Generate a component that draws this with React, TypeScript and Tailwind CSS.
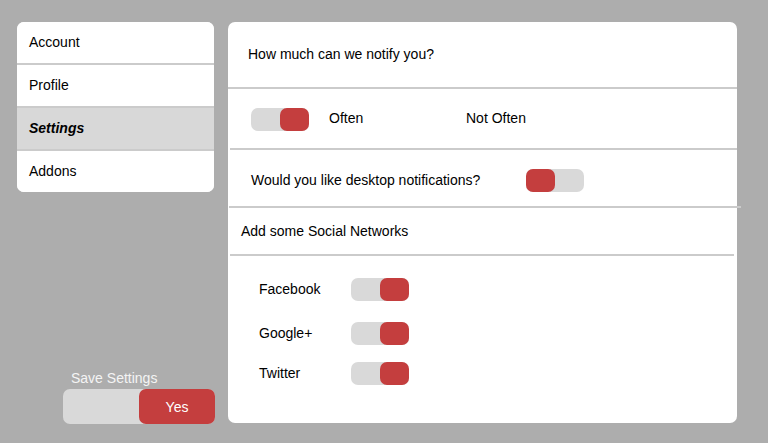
import React, { useState } from 'react';

const font = { fontFamily: '"Liberation Sans", Arial, sans-serif' };

const Toggle: React.FC<{ on: boolean; onClick: () => void }> = ({ on, onClick }) => (
  <button
    onClick={onClick}
    className={`flex h-[23px] w-[58px] shrink-0 rounded-[7px] bg-[#d9d9d9] ${on ? 'justify-end' : 'justify-start'}`}
  >
    <span className="h-full w-[29px] rounded-[7px] bg-[#c43e3e]" />
  </button>
);

const Divider: React.FC<{ className?: string }> = ({ className = '' }) => (
  <div className={`h-[2px] bg-[#cbcbcb] ${className}`} />
);

const navItems = ['Account', 'Profile', 'Settings', 'Addons'];

export default function App() {
  const [active, setActive] = useState('Settings');
  const [often, setOften] = useState(true);
  const [desktop, setDesktop] = useState(false);
  const [networks, setNetworks] = useState<Record<string, boolean>>({
    Facebook: true,
    'Google+': true,
    Twitter: true,
  });

  const toggleNetwork = (name: string) =>
    setNetworks((prev) => ({ ...prev, [name]: !prev[name] }));

  return (
    <div style={font} className="flex h-[443px] w-full bg-[#adadad] pl-[17px] pt-[22px] text-[14px] leading-[16px] text-black">
      {/* Left column */}
      <div className="flex h-[402px] w-[198px] flex-col">
        <nav className="w-[197px] overflow-hidden rounded-[7px] bg-white">
          {navItems.map((item, i) => (
            <React.Fragment key={item}>
              {i > 0 && <Divider />}
              <button
                onClick={() => setActive(item)}
                className={`flex h-[41px] w-full items-center pb-[1px] pl-[12px] text-left ${
                  active === item ? 'bg-[#d8d8d8] font-bold italic' : 'bg-white'
                }`}
              >
                {item}
              </button>
            </React.Fragment>
          ))}
        </nav>

        {/* Save settings */}
        <div className="mt-auto pl-[46px]">
          <div className="pl-[8px] text-[#f4f4f4]">Save Settings</div>
          <div className="mt-[3px] flex h-[35px] w-[152px] rounded-[7px] bg-[#d9d9d9]">
            <button className="ml-auto flex h-full w-[76px] items-center justify-center rounded-[7px] bg-[#c43e3e] text-white">
              Yes
            </button>
          </div>
        </div>
      </div>

      {/* Main card */}
      <div className="ml-[13px] h-[401px] w-[509px] rounded-[7px] bg-white">
        <div className="h-[65px] pl-[20px] pt-[24px]">How much can we notify you?</div>
        <Divider />

        <div className="flex h-[59px] items-center pl-[23px] pt-[1px]">
          <Toggle on={often} onClick={() => setOften(!often)} />
          <span className="mb-[2px] ml-[20px] w-[137px]">Often</span>
          <span className="mb-[2px]">Not Often</span>
        </div>
        <Divider className="ml-[2px]" />

        <div className="flex h-[56px] items-center pl-[23px] pt-[4px]">
          <span className="w-[275px]">Would you like desktop notifications?</span>
          <Toggle on={desktop} onClick={() => setDesktop(!desktop)} />
        </div>
        <Divider className="ml-[1px] w-[512px]" />

        <div className="flex h-[46px] items-center pl-[13px] pb-[1px]">Add some Social Networks</div>
        <Divider className="ml-[2px] w-[504px]" />

        <div className="flex flex-col pl-[31px] pt-[22px]">
          {Object.keys(networks).map((name, i) => (
            <div
              key={name}
              className={`flex items-center ${i === 1 ? 'mt-[21px]' : ''} ${i === 2 ? 'mt-[17px]' : ''}`}
            >
              <span className="mb-[2px] w-[92px]">{name}</span>
              <Toggle on={networks[name]} onClick={() => toggleNetwork(name)} />
            </div>
          ))}
        </div>
      </div>
    </div>
  );
}
